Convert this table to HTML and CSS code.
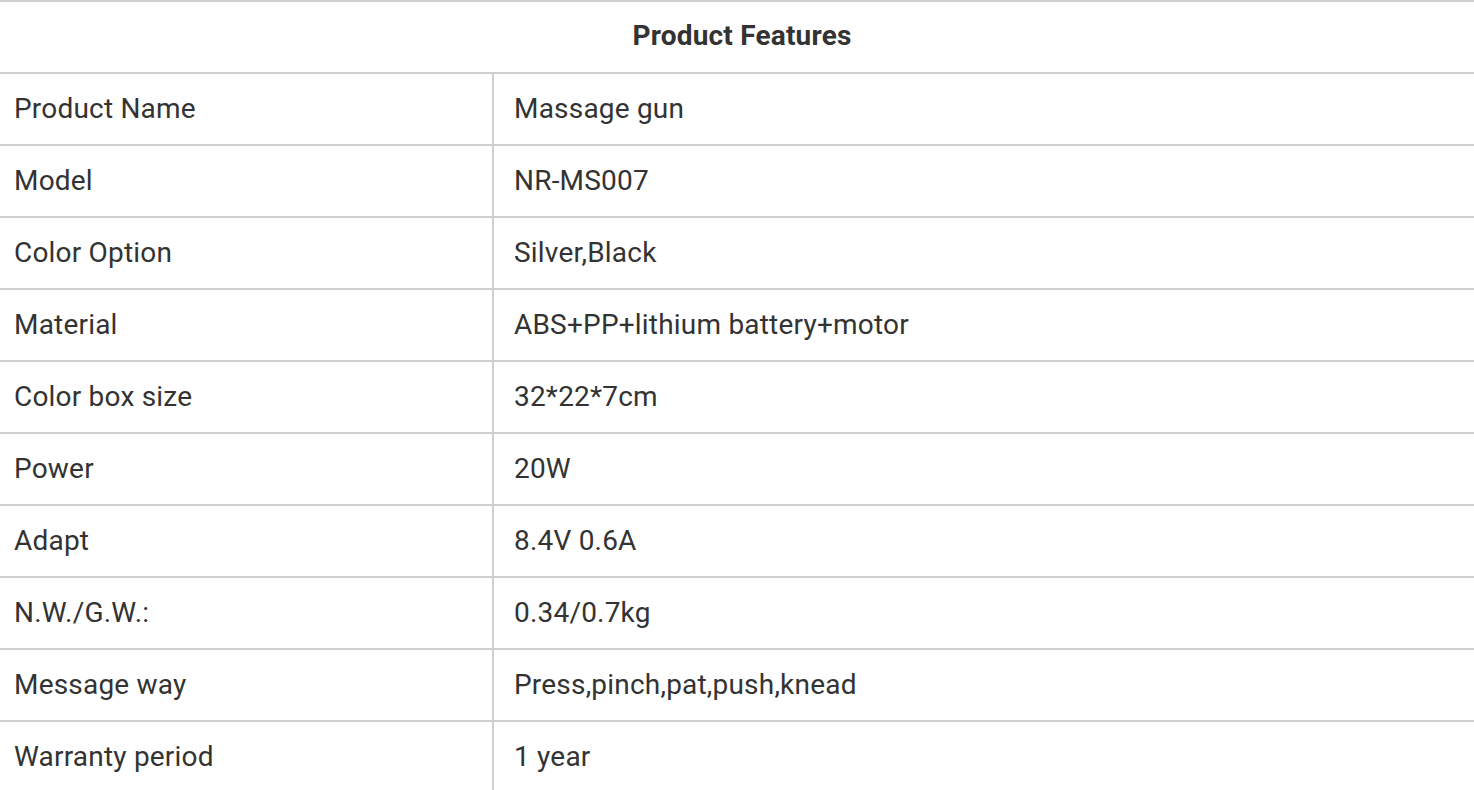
FILE: index.html
```html
<!DOCTYPE html>
<html lang="en">
<head>
<meta charset="utf-8">
<title>Product Features</title>
<link rel="stylesheet" href="styles.css">
</head>
<body>
<div class="spec">
  <div class="spec-head">Product Features</div>
  <div class="spec-row"><div class="spec-key">Product Name</div><div class="spec-val">Massage gun</div></div>
  <div class="spec-row"><div class="spec-key">Model</div><div class="spec-val">NR-MS007</div></div>
  <div class="spec-row"><div class="spec-key">Color Option</div><div class="spec-val">Silver,Black</div></div>
  <div class="spec-row"><div class="spec-key">Material</div><div class="spec-val">ABS+PP+lithium battery+motor</div></div>
  <div class="spec-row"><div class="spec-key">Color box size</div><div class="spec-val">32*22*7cm</div></div>
  <div class="spec-row"><div class="spec-key">Power</div><div class="spec-val">20W</div></div>
  <div class="spec-row"><div class="spec-key">Adapt</div><div class="spec-val">8.4V 0.6A</div></div>
  <div class="spec-row"><div class="spec-key">N.W./G.W.:</div><div class="spec-val">0.34/0.7kg</div></div>
  <div class="spec-row"><div class="spec-key">Message way</div><div class="spec-val">Press,pinch,pat,push,knead</div></div>
  <div class="spec-row"><div class="spec-key">Warranty period</div><div class="spec-val">1 year</div></div>
</div>
</body>
</html>
```
FILE: styles.css
```css
html, body {
  margin: 0;
  padding: 0;
  background: #ffffff;
}
body {
  font-family: Roboto, "Liberation Sans", Arial, sans-serif;
  color: #333333;
  font-size: 28px;
  letter-spacing: 0.2px;
  overflow: hidden;
}
.spec {
  width: 1474px;
  border-top: 2px solid #cfcfcf;
}
.spec-head {
  height: 70px;
  display: flex;
  align-items: center;
  justify-content: center;
  padding-left: 10px;
  padding-bottom: 3px;
  box-sizing: border-box;
  height: 72px;
  font-weight: 700;
  border-bottom: 2px solid #cfcfcf;
}
.spec-row {
  display: grid;
  grid-template-columns: 492px 1fr;
  height: 70px;
  border-bottom: 2px solid #cfcfcf;
}
.spec-key {
  display: flex;
  align-items: center;
  padding-left: 14px;
  padding-bottom: 1px;
}
.spec-val {
  display: flex;
  align-items: center;
  padding-left: 20px;
  padding-bottom: 1px;
  border-left: 2px solid #cfcfcf;
}
```
